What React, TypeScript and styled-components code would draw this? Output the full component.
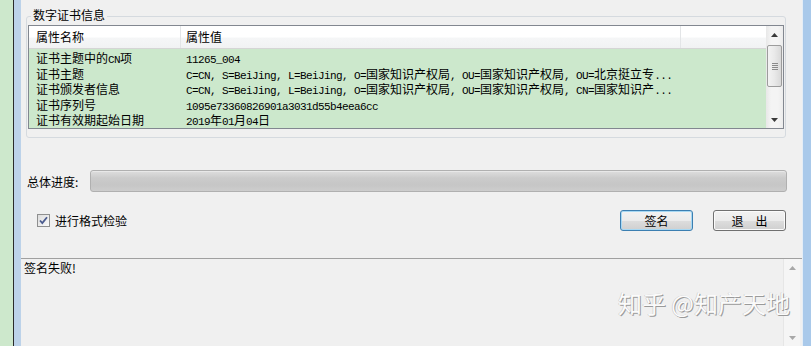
import React from "react"
import styled, { createGlobalStyle } from "styled-components"

const GlobalStyle = createGlobalStyle`
  html, body {
    margin: 0;
    padding: 0;
    background: #f0f0f0;
    overflow: hidden;
  }
  body {
    font-family: "Noto Sans CJK SC", "Liberation Sans", sans-serif;
    font-size: 12px;
    color: #000;
  }
`

const rows = [
  ["证书主题中的CN项", "11265_004"],
  [
    "证书主题",
    "C=CN, S=BeiJing, L=BeiJing, O=国家知识产权局, OU=国家知识产权局, OU=北京挺立专...",
  ],
  [
    "证书颁发者信息",
    "C=CN, S=BeiJing, L=BeiJing, O=国家知识产权局, OU=国家知识产权局, CN=国家知识产...",
  ],
  ["证书序列号", "1095e73360826901a3031d55b4eea6cc"],
  ["证书有效期起始日期", "2019年01月04日"],
]

// SimSun-like look: half width latin, full width CJK
const Mixed = ({ text }: { text: string }) => {
  const parts = text.match(/[\u3000-\u9fff\uff00-\uffef]+|[^\u3000-\u9fff\uff00-\uffef]+/g) || []
  return (
    <>
      {parts.map((p, i) =>
        /[\u3000-\u9fff\uff00-\uffef]/.test(p) ? (
          <Han key={i}>{p}</Han>
        ) : (
          <Latin key={i}>{p}</Latin>
        )
      )}
    </>
  )
}

const Arrow = ({ up, color }: { up?: boolean; color: string }) => (
  <svg width="7" height="4" viewBox="0 0 7 4">
    <path d={up ? "M0 4 L3.5 0 L7 4 Z" : "M0 0 L7 0 L3.5 4 Z"} fill={color} />
  </svg>
)

const App = () => {
  return (
    <Page>
      <GlobalStyle />
      <GreenStrip />
      <DarkLine />
      <BlueEdge />
      <Main>
        <GroupBox>
          <Legend>数字证书信息</Legend>
          <List>
            <ListBody>
              <Header>
                <HeadCell $w={152} $pad={7}>属性名称</HeadCell>
                <HeadCell $w={500} $pad={5}>属性值</HeadCell>
                <HeadCell $pad={5} $last />
              </Header>
              <Rows>
                {rows.map(([k, v]) => (
                  <Row key={k}>
                    <Cell $w={152} $pad={7}>
                      <Mixed text={k} />
                    </Cell>
                    <Cell $w={500} $pad={5}>
                      <Mixed text={v} />
                    </Cell>
                  </Row>
                ))}
              </Rows>
            </ListBody>
            <VScroll>
              <ArrowBox>
                <Arrow up color="#3a3a3a" />
              </ArrowBox>
              <Track>
                <Thumb>
                  <Grip />
                  <Grip />
                  <Grip />
                  <Grip />
                </Thumb>
              </Track>
              <ArrowBox>
                <Arrow color="#3a3a3a" />
              </ArrowBox>
            </VScroll>
          </List>
        </GroupBox>

        <ProgressRow>
          <Label>总体进度:</Label>
          <ProgressBar />
        </ProgressRow>

        <ActionRow>
          <CheckLabel>
            <CheckBox>
              <svg width="9" height="9" viewBox="0 0 9 9">
                <path
                  d="M1 4.5 L3.3 7 L8 1.2"
                  fill="none"
                  stroke="#4b5c8f"
                  strokeWidth="1.8"
                />
              </svg>
            </CheckBox>
            进行格式检验
          </CheckLabel>
          <Buttons>
            <Button $focused>签名</Button>
            <Button>退　出</Button>
          </Buttons>
        </ActionRow>

        <Lower>
          <TextArea>签名失败!</TextArea>
          <LowerScroll>
            <ArrowBox>
              <Arrow up color="#a8a8a8" />
            </ArrowBox>
            <Track />
            <ArrowBox>
              <Arrow color="#a8a8a8" />
            </ArrowBox>
          </LowerScroll>
          <Watermark>知乎 @知产天地</Watermark>
        </Lower>
      </Main>
      <RightEdge />
    </Page>
  )
}

const Page = styled.div`
  display: flex;
  width: 811px;
  height: 346px;
  overflow: hidden;
  background: #f0f0f0;
`

const GreenStrip = styled.div`
  width: 13px;
  background: #cde8cc;
`

const DarkLine = styled.div`
  width: 1px;
  background: #2a2a2a;
`

const BlueEdge = styled.div`
  width: 7px;
  background: #bcd2e9;
`

const RightEdge = styled.div`
  width: 9px;
  background: #a9c9ea;
  border-left: 1px solid #e4edf6;
  box-sizing: border-box;
`

const Main = styled.div`
  flex: 1;
  min-width: 0;
  display: flex;
  flex-direction: column;
`

const GroupBox = styled.div`
  position: relative;
  margin: 16px 0 0 5px;
  width: 760px;
  box-sizing: border-box;
  border: 1px solid #d5dadf;
  border-radius: 3px;
  padding: 8px 1px 8px 1px;
`

const Legend = styled.div`
  position: absolute;
  top: -9px;
  left: 4px;
  padding: 0 2px;
  line-height: 14px;
  background: #f0f0f0;
`

const List = styled.div`
  display: flex;
  width: 756px;
  height: 104px;
  box-sizing: border-box;
  border: 1px solid #828790;
  background: #fff;
`

const ListBody = styled.div`
  flex: 1;
  min-width: 0;
  display: flex;
  flex-direction: column;
`

const Header = styled.div`
  display: flex;
  height: 23px;
  box-sizing: border-box;
  border-bottom: 1px solid #d5d5d5;
  background: linear-gradient(#ffffff 0%, #ffffff 50%, #f5f6f7 55%, #f1f2f3 100%);
`

const HeadCell = styled.div<{ $w?: number; $pad: number; $last?: boolean }>`
  ${(p) => (p.$w ? `width: ${p.$w}px;` : "flex: 1;")}
  box-sizing: border-box;
  padding-left: ${(p) => p.$pad}px;
  border-right: ${(p) => (p.$last ? "none" : "1px solid #e3e5e7")};
  line-height: 22px;
  white-space: nowrap;
`

const Rows = styled.div`
  flex: 1;
  background: #cce8cc;
  overflow: hidden;
  padding-top: 1px;
`

const Row = styled.div`
  display: flex;
  height: 15.6px;
  line-height: 15.6px;
`

const Cell = styled.div<{ $w: number; $pad: number }>`
  width: ${(p) => p.$w}px;
  box-sizing: border-box;
  padding-left: ${(p) => p.$pad}px;
  white-space: nowrap;
  overflow: hidden;
`

const Han = styled.span`
  font-family: "Noto Sans CJK SC", sans-serif;
  font-size: 12px;
`

const Latin = styled.span`
  font-family: "Liberation Mono", monospace;
  font-size: 11px;
  letter-spacing: -0.6px;
  white-space: pre;
`

const VScroll = styled.div`
  width: 17px;
  display: flex;
  flex-direction: column;
  background: linear-gradient(90deg, #e8e8e8, #f4f4f4 30%, #f4f4f4 70%, #ececec);
`

const ArrowBox = styled.div`
  height: 17px;
  display: flex;
  align-items: center;
  justify-content: center;
`

const Track = styled.div`
  flex: 1;
  padding: 2px 1px;
`

const Thumb = styled.div`
  height: 42px;
  box-sizing: border-box;
  border: 1px solid #9c9c9c;
  border-radius: 2px;
  background: linear-gradient(90deg, #f3f3f3, #e9e9e9 50%, #d9d9d9);
  display: flex;
  flex-direction: column;
  align-items: center;
  justify-content: center;
  gap: 1px;
`

const Grip = styled.div`
  width: 6px;
  height: 1px;
  background: #8a8a8a;
`

const ProgressRow = styled.div`
  display: flex;
  align-items: center;
  margin-top: 32px;
  padding-left: 6px;
  height: 22px;
`

const Label = styled.div`
  width: 63px;
  white-space: nowrap;
`

const ProgressBar = styled.div`
  width: 697px;
  height: 22px;
  box-sizing: border-box;
  border: 1px solid #b0b0b0;
  border-radius: 3px;
  background: linear-gradient(#dedede 0%, #cbcbcb 35%, #c6c6c6 70%, #cdcdcd 100%);
  box-shadow: inset 0 1px 0 #e8e8e8;
`

const ActionRow = styled.div`
  display: flex;
  align-items: center;
  justify-content: space-between;
  margin-top: 18px;
  height: 21px;
  padding: 0 16px 0 16px;
`

const CheckLabel = styled.div`
  display: flex;
  align-items: center;
  gap: 5px;
`

const CheckBox = styled.div`
  width: 13px;
  height: 13px;
  box-sizing: border-box;
  border: 1px solid #8e8f8f;
  background: linear-gradient(135deg, #dcdcdc, #fafafa);
  display: flex;
  align-items: center;
  justify-content: center;
`

const Buttons = styled.div`
  display: flex;
  gap: 20px;
`

const Button = styled.div<{ $focused?: boolean }>`
  width: 73px;
  height: 21px;
  box-sizing: border-box;
  border: 1px solid ${(p) => (p.$focused ? "#3c7fb1" : "#707070")};
  border-radius: 3px;
  background: linear-gradient(#f2f2f2 0%, #ebebeb 50%, #dddddd 51%, #cfcfcf 100%);
  box-shadow: inset 0 0 0 1px ${(p) => (p.$focused ? "#a7d8f3" : "#fbfbfb")};
  display: flex;
  align-items: center;
  justify-content: center;
  line-height: 1;
`

const Lower = styled.div`
  position: relative;
  flex: 1;
  display: flex;
  margin-top: 27px;
  border-top: 1px solid #a0a0a0;
  padding-right: 2px;
`

const TextArea = styled.div`
  flex: 1;
  padding: 1px 3px;
  line-height: 16px;
`

const LowerScroll = styled(VScroll)`
  background: #f5f5f5;
  border-left: 1px solid #e6e6e6;
  box-sizing: border-box;
`

const Watermark = styled.div`
  position: absolute;
  right: 12px;
  top: 27px;
  font-size: 24px;
  line-height: 34px;
  color: #fbfbfb;
  text-shadow: 1px 1px 0 #9a9a9a, -0.5px -0.5px 0 #c4c4c4;
  white-space: nowrap;
`

export default App
